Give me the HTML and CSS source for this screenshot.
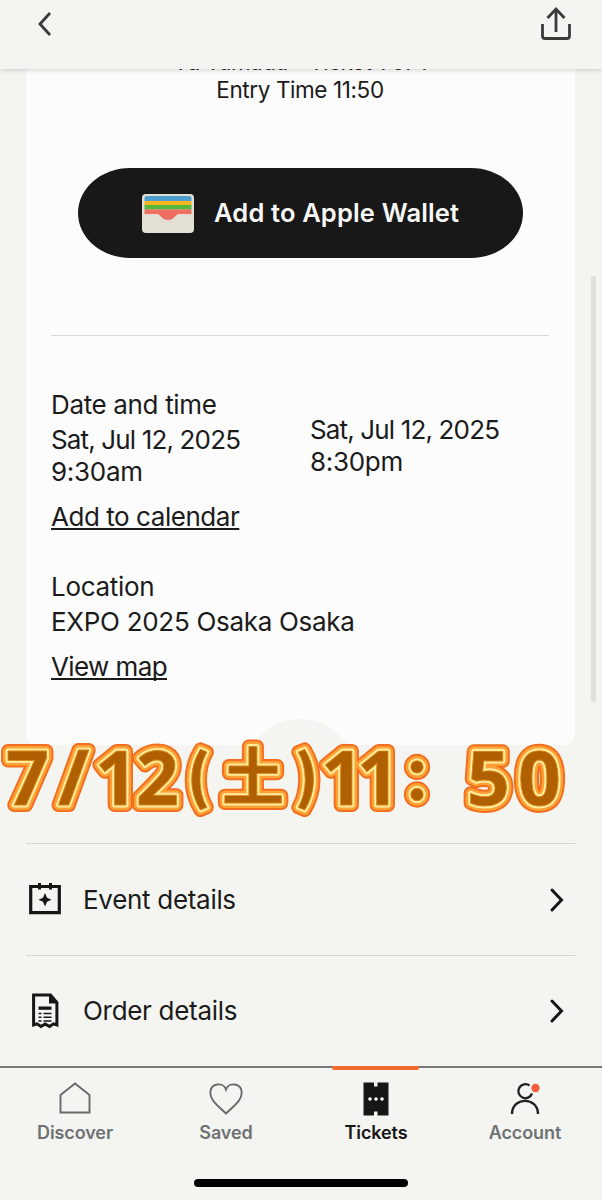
FILE: index.html
```html
<!DOCTYPE html>
<html lang="en">
<head>
  <meta charset="UTF-8">
  <meta name="viewport" content="width=device-width, initial-scale=1.0">
  <title>Tickets</title>
  <link rel="stylesheet" href="styles.css">
</head>
<body>
  <header class="topbar">
    <svg class="back" width="16" height="26" viewBox="0 0 16 26"><path d="M13 2 L3 13 L13 24"/></svg>
    <svg class="share" width="34" height="38" viewBox="0 0 34 38"><path d="M17 27 V4 M8.500 13 L17 4 L25.500 13 M3.500 19 V31 Q3.500 33.500 6 33.500 H28 Q30.500 33.500 30.500 31 V19"/></svg>
  </header>

  <main>
    <section class="card">
      <div class="holder">
        <p>Yu Yamada - Ticket 1 of 1</p>
        <p class="entry">Entry Time 11:50</p>
      </div>
      <button class="wallet">
        <svg width="52" height="39" viewBox="0 0 52 39">
          <rect width="52" height="39" rx="4" fill="#e4dfd4"/>
          <path d="M2.500 7 V4 Q2.500 2 4.500 2 H47.500 Q49.500 2 49.500 4 V7 Z" fill="#4a9fcb"/>
          <path d="M2.500 7 H49.500 V11 H2.500 Z" fill="#f5b51d"/>
          <path d="M2.500 11 H49.500 V15.500 H2.500 Z" fill="#55b83c"/>
          <path d="M2.500 15.500 H49.500 V20 H37 C33 20 33 26 26 26 C19 26 19 20 15 20 H2.500 Z" fill="#ee6f5f"/>
        </svg>
        <span>Add to Apple Wallet</span>
      </button>
      <hr>
      <div class="dates">
        <div>
          <p class="label l-date">Date and time</p>
          <p class="day">Sat, Jul 12, 2025</p>
          <p class="start">9:30am</p>
        </div>
        <div class="end">
          <p class="day">Sat, Jul 12, 2025</p>
          <p class="finish">8:30pm</p>
        </div>
      </div>
      <a class="link l-cal" href="#">Add to calendar</a>
      <div class="location">
        <p class="label l-loc">Location</p>
        <p class="place">EXPO 2025 Osaka Osaka</p>
      </div>
      <a class="link l-map" href="#">View map</a>
      <div class="notch"></div>
    </section>

    <ul class="list">
      <li>
        <svg width="34" height="36" viewBox="0 1 34 36">
          <path d="M2.700 5.500 H31.300 V31.700 H2.700 Z" fill="none" stroke="#161616" stroke-width="3.200"/>
          <path d="M10 2 H13 V8.500 H10 Z M21 2 H24 V8.500 H21 Z" fill="#161616"/>
          <path d="M17 12 L19 16.800 L23.500 18.800 L19 20.800 L17 25.500 L15 20.800 L10.500 18.800 L15 16.800 Z" fill="#161616"/>
        </svg>
        <span>Event details</span>
        <svg class="chev" width="16" height="26" viewBox="0 0 16 26"><path d="M3 3 L12.500 13 L3 23"/></svg>
      </li>
      <li>
        <svg width="34" height="36" viewBox="0 0 34 36">
          <path d="M5.600 32 V2.100 H22.500 L28.900 9.500 V32 L25.500 30.800 L21.500 33.500 L17.200 31 L13 33.500 L9 30.800 Z" fill="none" stroke="#161616" stroke-width="3"/>
          <path d="M21 2 V10.500 H29 Z" fill="#161616"/>
          <path d="M10.500 13.500 H23.500 V16.800 H10.500 Z" fill="#161616"/>
          <path d="M10.500 20.500 H13.500 M15.500 20.500 H23.500 M10.500 24.200 H13.500 M15.500 24.200 H23.500 M10.500 27.900 H13.500 M15.500 27.900 H23.500" stroke="#161616" stroke-width="1.500"/>
        </svg>
        <span>Order details</span>
        <svg class="chev" width="16" height="26" viewBox="0 0 16 26"><path d="M3 3 L12.500 13 L3 23"/></svg>
      </li>
    </ul>
  </main>

  <nav class="tabs">
    <a href="#">
      <svg width="36" height="36" viewBox="0 0 36 36"><path d="M3.500 14 L18 2.500 L32.500 14 V31.500 H3.500 Z" fill="none" stroke="#666a6c" stroke-width="1.900"/></svg>
      <span>Discover</span>
    </a>
    <a href="#">
      <svg width="36" height="36" viewBox="0 0 36 36"><path d="M18 8.500 C15.500 1 2.300 1.500 2.300 12 C2.300 19 9 24 18 32.500 C27 24 33.700 19 33.700 12 C33.700 1.500 20.500 1 18 8.500 Z" fill="none" stroke="#666a6c" stroke-width="1.900"/></svg>
      <span>Saved</span>
    </a>
    <a class="active" href="#">
      <svg width="36" height="36" viewBox="0 0 36 36">
        <path d="M5.500 1.500 H16 V5.500 H19.500 V1.500 H30.500 V34.500 H19.500 V30.500 H16 V34.500 H5.500 Z" fill="#161616"/>
        <g fill="#fff"><circle cx="12" cy="18" r="1.800"/><circle cx="18" cy="18" r="1.800"/><circle cx="24" cy="18" r="1.800"/></g>
      </svg>
      <span>Tickets</span>
    </a>
    <a href="#">
      <svg width="36" height="36" viewBox="0 0 36 36">
        <path d="M22.500 4.500 A7 7 0 1 0 25 12.500 M5 33 C5 15.500 31 15.500 31 33" fill="none" stroke="#222" stroke-width="2.400"/>
        <circle cx="28.500" cy="7" r="4.200" fill="#f1603c"/>
      </svg>
      <span>Account</span>
    </a>
  </nav>

  <div class="home-bar"></div>
  <div class="scrollbar"></div>

  <!-- sticker: same text stacked with thinner and thinner outlines -->
  <svg class="sticker" width="602" height="100" viewBox="0 0 602 100">
    <defs>
      <g id="msg">
        <text class="num" x="6 58 95 136" y="75">7/12</text>
        <text class="kanji mark" x="187" y="68">(</text>
        <text class="kanji" x="222" y="70">土</text>
        <text class="kanji mark" x="295" y="68">)</text>
        <text class="num" x="321 357" y="75">11</text>
        <text class="kanji mark" x="388" y="72">：</text>
        <text class="num" x="467 518" y="75">50</text>
      </g>
    </defs>
    <use href="#msg" class="s1"/>
    <use href="#msg" class="s2"/>
    <use href="#msg" class="s3"/>
    <use href="#msg" class="s4"/>
  </svg>
</body>
</html>
```
FILE: styles.css
```css
* { box-sizing: border-box; }
body { margin: 0; width: 602px; height: 1200px; position: relative; overflow: hidden; display: flex; flex-direction: column; background: #f4f5f0; color: #1b1b1b; font-family: Inter, "Liberation Sans", sans-serif; font-size: 26px; line-height: 32px; }
p, ul { margin: 0; padding: 0; }
svg { display: block; flex: none; }

.topbar { height: 69px; flex: none; display: flex; justify-content: space-between; align-items: flex-start; padding: 5px 29px 0 36px; background: #f4f5f0; box-shadow: 0 1px 5px rgba(0, 0, 0, 0.18); z-index: 1; }
.topbar path { fill: none; stroke: #3a3a3a; stroke-width: 2.8; }
.back { margin: 6px 0 0 1px; }

main { height: 997px; flex: none; padding: 0 27px 0 26px; overflow: hidden; }
.card { position: relative; height: 676px; padding: 0 26px 0 25px; background: #fcfcfc; border-radius: 0 0 10px 10px; overflow: hidden; }
.holder { height: 99px; margin-top: -21px; text-align: center; font-size: 22.5px; line-height: 28px; letter-spacing: -0.5px; }
.entry { letter-spacing: -0.4px; }
.wallet { display: flex; align-items: center; gap: 20px; width: 445px; height: 90px; margin: 21px 0 0 27px; padding: 0 0 0 64px; border: none; border-radius: 52px / 45px; background: #181818; color: #f7f7f5; font: 600 25.5px Inter, sans-serif; letter-spacing: 0.15px; white-space: nowrap; }
.wallet span { padding-bottom: 2px; }
hr { height: 1px; margin: 77px 0 0; border: none; background: #d8d8d6; }
.dates { display: grid; grid-template-columns: 259px 1fr; padding-top: 53px; }
.end { padding-top: 25px; }
.label { margin-bottom: 3px; }
.l-date { letter-spacing: -0.35px; }
.day { letter-spacing: -0.85px; }
.start, .finish, .l-loc, .place { letter-spacing: -0.3px; }
.link { display: table; margin-top: 13px; color: inherit; text-decoration: underline; text-decoration-thickness: 1.5px; text-underline-offset: 2px; text-decoration-skip-ink: none; }
.l-cal { letter-spacing: -0.45px; }
.l-map { letter-spacing: -0.6px; }
.location { margin-top: 38px; }
.notch { position: absolute; left: 217px; top: 650px; width: 114px; height: 114px; border-radius: 50%; background: #f4f5f0; }

.list { margin-top: 98px; list-style: none; }
.list li { display: flex; align-items: center; height: 112px; padding: 0 10px 0 2px; border-top: 1px solid #d4d5d1; }
.list li + li { height: 111px; }
.list span { flex: 1; margin-left: 21px; letter-spacing: -0.3px; }
.chev path { fill: none; stroke: #161616; stroke-width: 3; stroke-linecap: round; }

.tabs { display: grid; grid-template-columns: repeat(4, 150px); height: 134px; padding: 1px 0 0 1px; background: #f4f5f0; z-index: 1; }
.tabs::before { content: ""; position: absolute; left: 0; right: 0; top: 1066px; height: 2px; background: #77797a; }
.tabs a { position: relative; display: flex; flex-direction: column; align-items: center; padding-top: 14px; color: #6f7275; font-size: 18px; font-weight: 600; line-height: 24px; letter-spacing: -0.1px; text-decoration: none; }
.tabs span { margin-top: 4px; }
.tabs a:first-child, .tabs a:last-child { left: -1px; }
.tabs .active { color: #161616; }
.tabs .active::before { content: ""; position: absolute; left: 31px; top: -1px; width: 87px; height: 4px; border-radius: 0 0 2px 2px; background: #ef6c2b; }
.home-bar { position: absolute; left: 194px; top: 1179px; width: 214px; height: 8px; border-radius: 4px; background: #000; z-index: 2; }
.scrollbar { position: absolute; left: 591px; top: 276px; width: 5px; height: 426px; border-radius: 3px; background: #dfe0db; }

.sticker { position: absolute; left: 0; top: 730px; stroke-linejoin: round; }
.num { font-family: "Noto Sans", sans-serif; font-weight: 700; font-size: 75px; }
.kanji { font-family: "Noto Sans CJK JP", sans-serif; font-weight: 700; font-size: 62px; }
.kanji.mark { font-weight: 900; font-size: 58px; }
.s1 { fill: #f26f22; stroke: #f26f22; stroke-width: 14px; }
.s2 { fill: #ffa035; stroke: #ffa035; stroke-width: 10px; }
.s3 { fill: #ffec9b; stroke: #ffec9b; stroke-width: 5px; }
.s4 { fill: #b06000; stroke: #d78518; stroke-width: 0.8px; }
```
